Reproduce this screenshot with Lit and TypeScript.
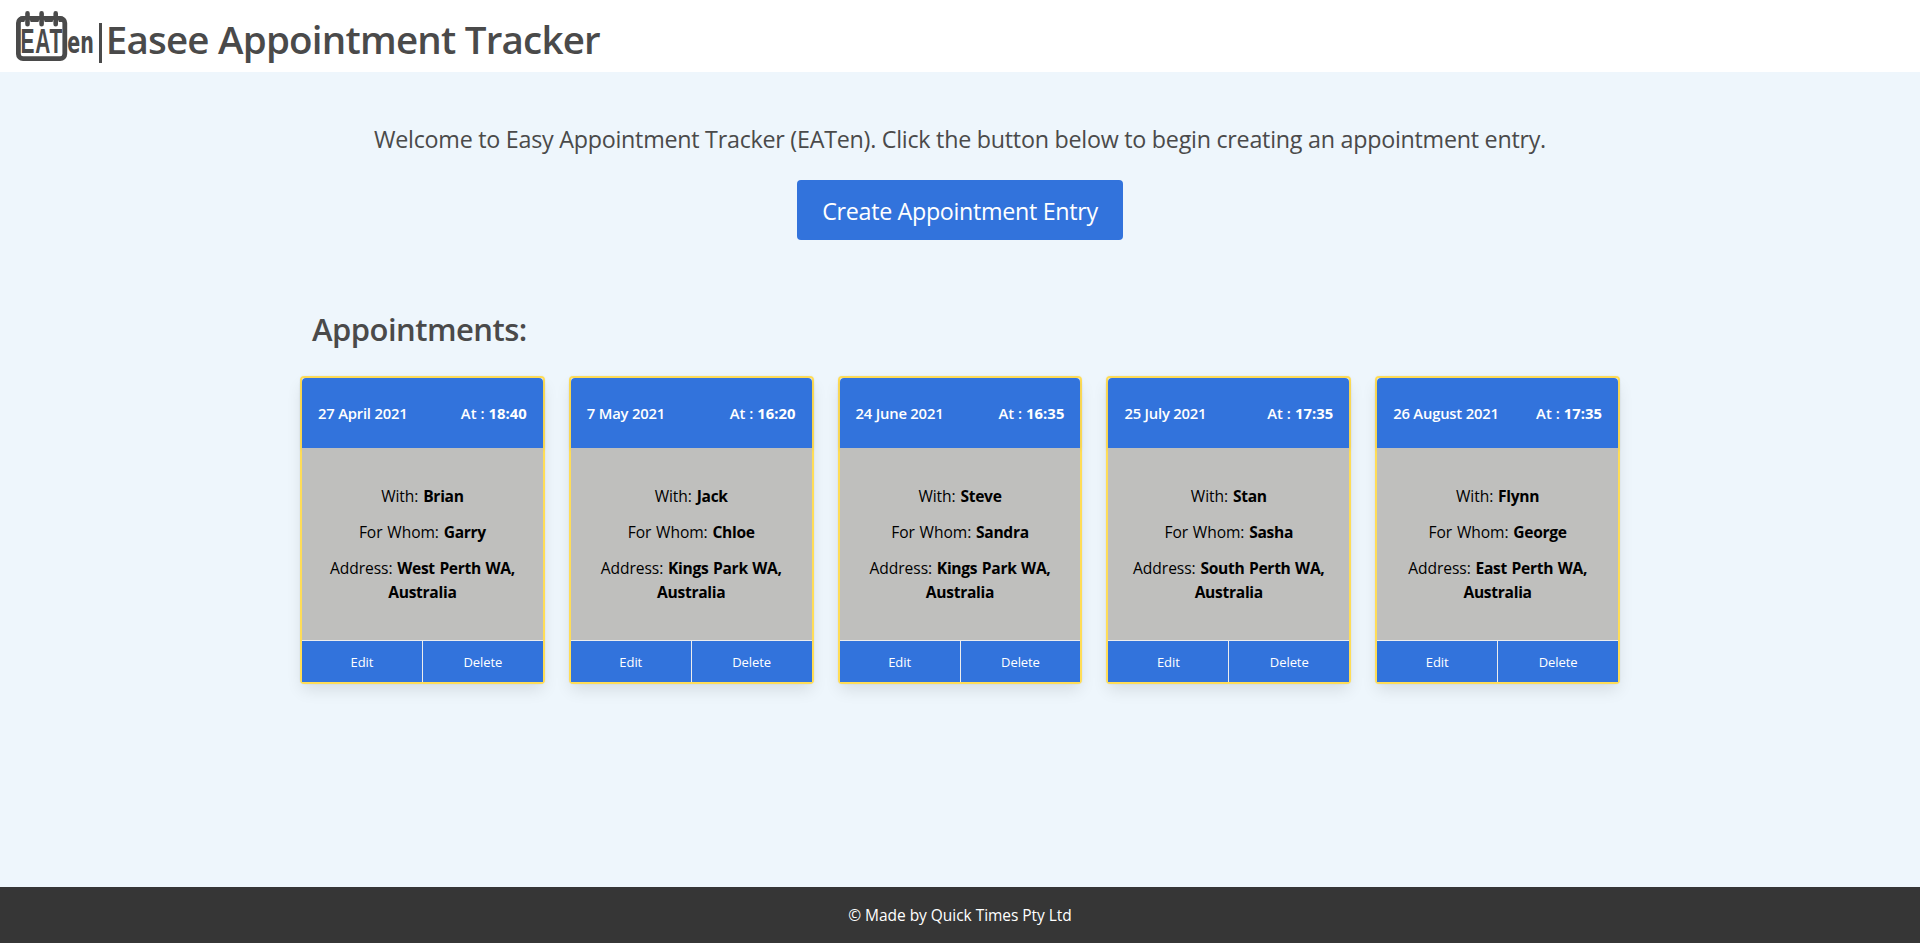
import { LitElement, html, css } from "lit";
import { customElement, property } from "lit/decorators.js";

interface Appointment {
  date: string;
  time: string;
  host: string;
  guest: string;
  address: string;
}

const APPOINTMENTS: Appointment[] = [
  { date: "27 April 2021", time: "18:40", host: "Brian", guest: "Garry", address: "West Perth WA, Australia" },
  { date: "7 May 2021", time: "16:20", host: "Jack", guest: "Chloe", address: "Kings Park WA, Australia" },
  { date: "24 June 2021", time: "16:35", host: "Steve", guest: "Sandra", address: "Kings Park WA, Australia" },
  { date: "25 July 2021", time: "17:35", host: "Stan", guest: "Sasha", address: "South Perth WA, Australia" },
  { date: "26 August 2021", time: "17:35", host: "Flynn", guest: "George", address: "East Perth WA, Australia" },
];

@customElement("eaten-logo")
export class EatenLogo extends LitElement {
  static styles = css`
    :host { display: block; width: 80px; height: 52px; }
    svg { display: block; overflow: visible; }
    .ink { fill: #4a4a4a; }
    .frame { fill: none; stroke: #4a4a4a; stroke-width: 4.8; }
    .gap { stroke: #fff; stroke-width: 6.2; stroke-linecap: round; }
    .ring { stroke: #4a4a4a; stroke-width: 4.6; stroke-linecap: round; }
    .word { font: 700 35.4px "Liberation Sans", Arial, sans-serif; }
    .tail { font: 700 31px "DejaVu Sans Condensed", "DejaVu Sans", sans-serif; }
  `;

  render() {
    return html`
      <svg width="80" height="52" viewBox="0 0 80 52" role="img" aria-label="EATen">
        <rect class="frame" x="2.4" y="9.4" width="46.4" height="40.2" rx="4.6" />
        <path class="ink" d="M3 10 Q3 7.2 6 7.2 H45 Q48 7.2 48 10 V13 H3Z" />
        <path class="gap" d="M11.5 13.4V15.3M25.6 13.4V15.3M39.7 13.4V15.3" />
        <path class="ring" d="M11.5 4.4V15.3M25.6 4.4V15.3M39.7 4.4V15.3" />
        <text class="word ink" transform="translate(4.6 44.3) scale(0.59 1)" x="0" y="0" textLength="70.5" lengthAdjust="spacing">EAT</text>
        <text class="tail ink" transform="translate(51.3 44.3) scale(0.665 1)" x="0" y="0" textLength="40" lengthAdjust="spacingAndGlyphs">en</text>
      </svg>
    `;
  }
}

@customElement("appointment-card")
export class AppointmentCard extends LitElement {
  @property({ attribute: false }) appointment!: Appointment;

  static styles = css`
    * { box-sizing: border-box; }
    :host { display: block; }
    .card {
      border: 2px solid #ffdd57;
      border-radius: 4px;
      background: #fff;
      color: #000;
      box-shadow: 0 8px 16px -2px rgba(10, 10, 10, 0.1), 0 0 0 1px rgba(10, 10, 10, 0.02);
    }
    .head {
      display: flex;
      align-items: center;
      justify-content: space-between;
      height: 70px;
      padding: 0 16px;
      border-radius: 4px 4px 0 0;
      background: #3273dc;
      color: #fff;
      font-size: 14.8px;
      font-weight: 600;
      letter-spacing: -0.2px;
      box-shadow: 0 2px 4px rgba(10, 10, 10, 0.1);
    }
    .time { letter-spacing: 0.05px; }
    .head b { font-weight: 700; }
    .body {
      position: relative;
      height: 192px;
      padding: 36px 24px 0;
      background: #bfbfbd;
      text-align: center;
      font-size: 15.6px;
      line-height: 24px;
    }
    p { margin: 0 0 12px; letter-spacing: -0.06px; word-spacing: 0.8px; }
    p b { letter-spacing: -0.3px; }
    .actions {
      display: flex;
      border-top: 1px solid #ededed;
    }
    .action {
      flex: 1;
      height: 41px;
      padding: 1px 0 0;
      border: 0;
      background: #3273dc;
      color: #fff;
      font: inherit;
      font-size: 13px;
      letter-spacing: -0.08px;
    }
    .action + .action { border-left: 1px solid #ededed; }
  `;

  render() {
    const a = this.appointment;
    return html`
      <article class="card">
        <header class="head">
          <span>${a.date}</span>
          <span class="time">At : <b>${a.time}</b></span>
        </header>
        <div class="body">
          <p>With: <b>${a.host}</b></p>
          <p>For Whom: <b>${a.guest}</b></p>
          <p>Address: <b>${a.address}</b></p>
        </div>
        <footer class="actions">
          <button class="action">Edit</button>
          <button class="action">Delete</button>
        </footer>
      </article>
    `;
  }
}

@customElement("app-root")
export class AppRoot extends LitElement {
  static styles = css`
    * { box-sizing: border-box; }
    :host {
      display: flex;
      flex-direction: column;
      height: 943px;
      background: #eef6fc;
      color: #4a4a4a;
      font-family: "Open Sans", "Noto Sans", sans-serif;
    }
    .bar {
      display: flex;
      align-items: flex-start;
      height: 72px;
      padding: 9px 16px 0;
      background: #fff;
    }
    h1 {
      margin: 3px 0 0;
      font-size: 38.5px;
      font-weight: 600;
      line-height: 54px;
      letter-spacing: -0.77px;
      white-space: nowrap;
    }
    .divider {
      width: 3px;
      height: 40px;
      margin: 14px 4.2px 0 2.5px;
      background: #4a4a4a;
    }
    main { flex: 1; }
    .hero {
      display: flex;
      flex-direction: column;
      align-items: center;
      padding-top: 47px;
    }
    .welcome {
      margin: 0;
      font-size: 23.3px;
      line-height: 40px;
      letter-spacing: -0.262px;
    }
    .create {
      width: 326px;
      height: 60px;
      margin-top: 21px;
      padding: 1px 0 0;
      border: 0;
      border-radius: 4px;
      background: #3273dc;
      color: #fff;
      font: inherit;
      font-size: 23.3px;
      letter-spacing: -0.33px;
    }
    .list {
      width: 1344px;
      margin: 69px auto 0;
    }
    h2 {
      margin: 0 0 27px;
      padding-left: 24px;
      font-size: 31px;
      font-weight: 600;
      line-height: 40px;
      letter-spacing: -0.52px;
    }
    .grid {
      display: grid;
      grid-template-columns: repeat(5, 1fr);
      gap: 24px;
      padding: 0 12px;
    }
    .foot {
      height: 56px;
      background: #363636;
      color: #fff;
      text-align: center;
      font-size: 15.5px;
      line-height: 56px;
      letter-spacing: -0.04px;
    }
  `;

  render() {
    return html`
      <header class="bar">
        <eaten-logo></eaten-logo>
        <span class="divider"></span>
        <h1>Easee Appointment Tracker</h1>
      </header>
      <main>
        <section class="hero">
          <p class="welcome">Welcome to Easy Appointment Tracker (EATen). Click the button below to begin creating an appointment entry.</p>
          <button class="create">Create Appointment Entry</button>
        </section>
        <section class="list">
          <h2>Appointments:</h2>
          <div class="grid">
            ${APPOINTMENTS.map((a) => html`<appointment-card .appointment=${a}></appointment-card>`)}
          </div>
        </section>
      </main>
      <footer class="foot">© Made by Quick Times Pty Ltd</footer>
    `;
  }
}
